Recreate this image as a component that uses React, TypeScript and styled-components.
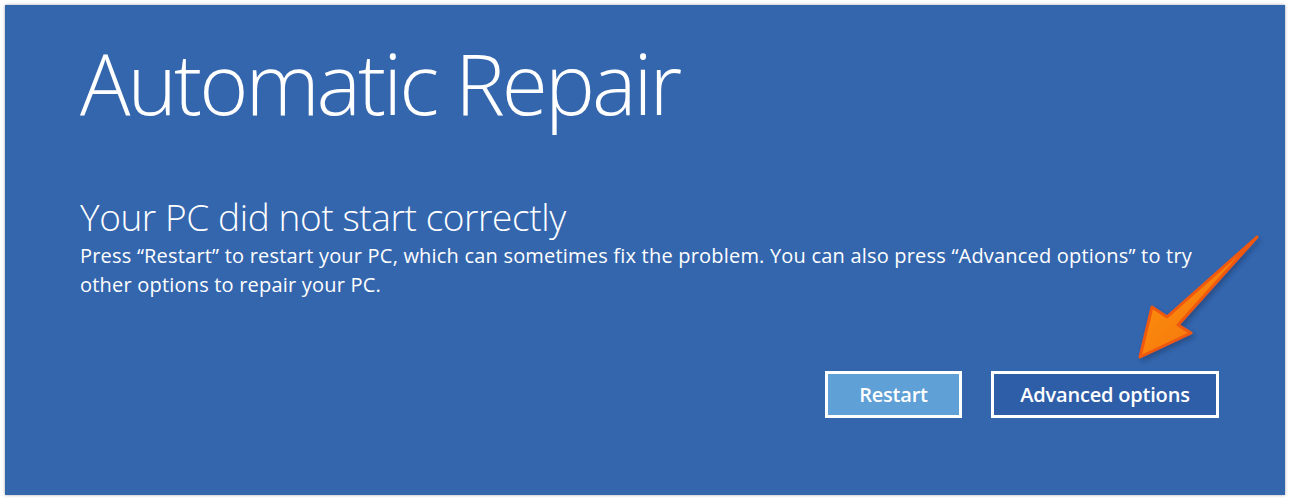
import React from "react";
import styled, { createGlobalStyle } from "styled-components";

const Global = createGlobalStyle`
  html, body { margin: 0; padding: 0; background: #ffffff; }
  body { font-family: "Open Sans", "Noto Sans", sans-serif; }
`;

const Page = styled.div`
  box-sizing: border-box;
  width: 1290px;
  height: 500px;
  padding: 5px;
  background: #ffffff;
`;

const Panel = styled.div`
  position: relative;
  box-sizing: border-box;
  height: 100%;
  background: #3466ae;
  box-shadow: 0 0 3px rgba(0, 0, 0, 0.35);
  padding: 28px 0 0 75px;
  display: flex;
  flex-direction: column;
  color: #ffffff;
`;

const Title = styled.h1`
  margin: 0;
  font-family: "Open Sans", sans-serif;
  font-weight: 300;
  font-size: 84px;
  line-height: 100px;
  letter-spacing: -3px;
`;

const Subtitle = styled.h2`
  margin: 62px 0 0 0;
  font-family: "Open Sans", sans-serif;
  font-weight: 300;
  font-size: 37px;
  line-height: 44px;
  letter-spacing: -0.4px;
`;

const Body = styled.p`
  margin: 2px 0 0 0;
  width: 1130px;
  font-family: "Open Sans", sans-serif;
  font-weight: 400;
  font-size: 20px;
  line-height: 29px;
  letter-spacing: 0.2px;
`;

const Actions = styled.div`
  display: flex;
  justify-content: flex-end;
  gap: 29px;
  margin-top: 72px;
  padding-right: 66px;
`;

const Button = styled.button<{ $primary?: boolean }>`
  box-sizing: border-box;
  height: 47px;
  width: ${(p) => (p.$primary ? "137px" : "228px")};
  border: 3px solid #ffffff;
  background: ${(p) => (p.$primary ? "#5fa0d6" : "#2f5ea8")};
  color: #ffffff;
  font-family: "Open Sans", sans-serif;
  font-weight: 600;
  font-size: 20px;
  letter-spacing: -0.2px;
  padding: 0;
`;

const ArrowSvg = styled.svg`
  position: absolute;
  left: 1125px;
  top: 223px;
  overflow: visible;
`;

export default function App() {
  return (
    <>
      <Global />
      <Page>
        <Panel>
          <Title>Automatic Repair</Title>
          <Subtitle>Your PC did not start correctly</Subtitle>
          <Body>
            Press “Restart” to restart your PC, which can sometimes fix the problem. You can also press “Advanced
            options” to try other options to repair your PC.
          </Body>
          <Actions>
            <Button $primary>Restart</Button>
            <Button>Advanced options</Button>
          </Actions>
          <ArrowSvg width="140" height="140" viewBox="0 0 140 140">
            <defs>
              <linearGradient id="ag" x1="0" y1="0" x2="1" y2="1">
                <stop offset="0" stopColor="#ff9a1a" />
                <stop offset="1" stopColor="#f26a00" />
              </linearGradient>
              <filter id="as" x="-30%" y="-30%" width="160%" height="160%">
                <feDropShadow dx="2" dy="3" stdDeviation="2.5" floodColor="#1a2a50" floodOpacity="0.45" />
              </filter>
            </defs>
            <path
              d="M127 9 L48 97 L61 105 L10 129 L22 79 L37 89 Z"
              fill="url(#ag)"
              stroke="#f0580a"
              strokeWidth="3"
              strokeLinejoin="round"
              filter="url(#as)"
            />
          </ArrowSvg>
        </Panel>
      </Page>
    </>
  );
}
